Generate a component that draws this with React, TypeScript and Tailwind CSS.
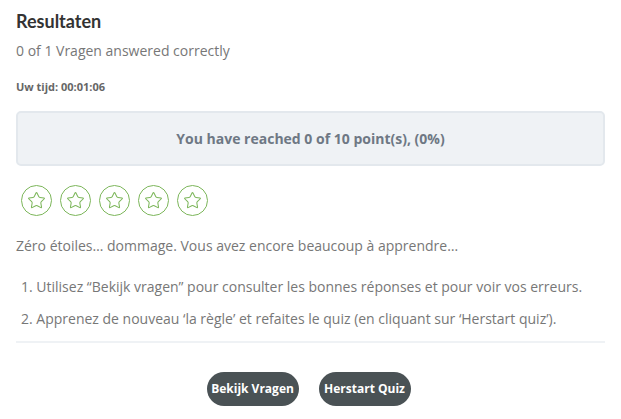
import { Star } from "lucide-react";

function StarCircle() {
  return (
    <div className="w-[31px] h-[31px] rounded-full border border-[#7cb65a] flex items-center justify-center">
      <Star size={19} strokeWidth={1.3} className="text-[#7cb65a]" />
    </div>
  );
}

export default function App() {
  return (
    <div className="w-[621px] h-[419px] bg-white px-4 font-['Open_Sans',sans-serif] text-[#777]">
      <h2 className="pt-[10px] text-[18px] leading-[22px] font-bold text-[#333] font-['Lato',sans-serif]">Resultaten</h2>
      <p className="mt-[9px] text-[14px] leading-[19px]">0 of 1 Vragen answered correctly</p>
      <p className="mt-[20px] text-[11px] leading-[14px] font-bold text-[#666]">Uw tijd: 00:01:06</p>
      <div className="mt-[17px] h-[55px] rounded-[5px] border-2 border-[#e3e8ed] bg-[#eff2f5] flex items-center justify-center">
        <span className="text-[14px] font-bold text-[#6e7884]">
          You have reached 0 of 10 point(s), (0%)
        </span>
      </div>
      <div className="mt-[19px] ml-[5px] flex gap-[8px]">
        <StarCircle />
        <StarCircle />
        <StarCircle />
        <StarCircle />
        <StarCircle />
      </div>
      <p className="mt-[20px] text-[14px] leading-[19px]">
        Zéro étoiles… dommage. Vous avez encore beaucoup à apprendre…
      </p>
      <ol className="mt-[22px] pl-[5px] text-[14px] leading-[19px]">
        <li>1. Utilisez “Bekijk vragen” pour consulter les bonnes réponses et pour voir vos erreurs.</li>
        <li className="mt-[13px]">2. Apprenez de nouveau ‘la règle’ et refaites le quiz (en cliquant sur ‘Herstart quiz’).</li>
      </ol>
      <div className="mt-[13px] h-[2px] bg-[#eff2f5]" />
      <div className="mt-[29px] pr-[4px] flex justify-center gap-[20px]">
        <button className="h-[34px] w-[92px] rounded-full bg-[#4a5255] text-white text-[12px] font-bold [font-stretch:92%]">
          Bekijk Vragen
        </button>
        <button className="h-[34px] w-[92px] rounded-full bg-[#4a5255] text-white text-[12px] font-bold [font-stretch:92%]">
          Herstart Quiz
        </button>
      </div>
    </div>
  );
}
